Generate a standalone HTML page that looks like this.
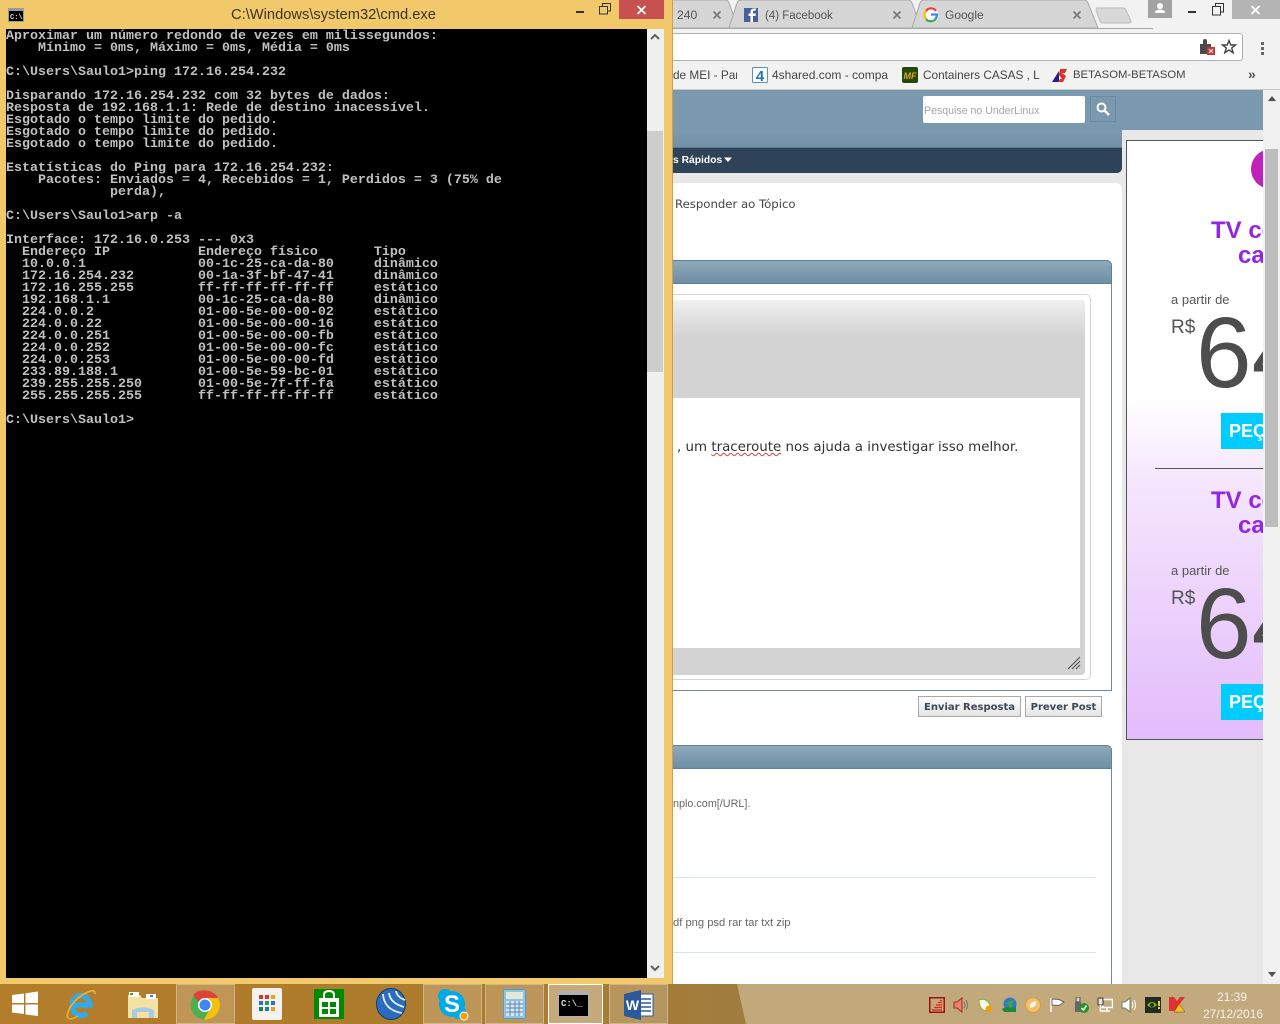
<!DOCTYPE html>
<html lang="pt"><head><meta charset="utf-8"><title>cmd</title>
<style>
html,body{margin:0;padding:0;width:1280px;height:1024px;overflow:hidden;background:#fff}
div,span,svg,pre{position:absolute;box-sizing:border-box}
span.i{position:static}
body{font-family:"Liberation Sans",sans-serif}
.t{white-space:nowrap}
.dj{font-family:"DejaVu Sans",sans-serif}
.ph{background:linear-gradient(#8ea9bb,#6e8fa5);border:1px solid #5f8098;border-radius:0 5px 0 0;border-left:0}
.btn{background:linear-gradient(#fff,#e4e4e4);border:1px solid #a9a9a9;font:bold 10px/21px "DejaVu Sans",sans-serif;color:#3b4856;text-align:center;white-space:nowrap}
.tb{top:984px;height:40px;border:1px solid rgba(255,255,255,.3);background:rgba(255,255,255,.2)}
</style></head><body>

<!-- BROWSER -->
<div style="left:673px;top:0;width:607px;height:984px;background:#f2f2f2;overflow:hidden"></div>
<svg style="left:673px;top:0" width="480" height="30" viewBox="673 0 480 30">
<path d="M660 0H725Q728 0 729 3L738 28H660Z" fill="#d6d6d6" stroke="#a8a8a8"/>
<path d="M729 28L737 3Q738 0 742 0H908Q911 0 912 3L921 28Z" fill="#d6d6d6" stroke="#a8a8a8"/>
<path d="M912 28L920 3Q921 0 925 0H1084Q1087 0 1088 3L1098 28Z" fill="#d6d6d6" stroke="#a8a8a8"/>
<path d="M1097 8H1123Q1125 8 1126 10L1131 21Q1131 23 1129 23H1103Q1101 23 1100 21L1096 10Q1096 8 1097 8Z" fill="#d8d8d8" stroke="#bbb"/>
<path d="M673 28.500H1153" stroke="#a8a8a8"/>
<path d="M713.500 11.500l7 7M720.500 11.500l-7 7M893.500 11.500l7 7M900.500 11.500l-7 7M1073.500 11.500l7 7M1080.500 11.500l-7 7" stroke="#777" stroke-width="1.700"/>
<rect x="744" y="8" width="14" height="14" fill="#46609a"/>
<path d="M753 22V16H755.500L756 13.500H753V12Q753 10.500 754.500 10.500H756V8.500H754Q750.500 8.500 750.500 12V13.500H748.500V16H750.500V22Z" fill="#fff"/>
<circle cx="931" cy="15" r="7.500" fill="#fff"/>
<path d="M936 11A6 6 0 0 0 926 11" fill="none" stroke="#e94235" stroke-width="2.200"/>
<path d="M926 11A6 6 0 0 0 926 19" fill="none" stroke="#fbbc05" stroke-width="2.200"/>
<path d="M926 19A6 6 0 0 0 936.500 17" fill="none" stroke="#34a853" stroke-width="2.200"/>
<path d="M931 14.500H937Q937 17 935.500 19" fill="none" stroke="#4285f4" stroke-width="2.200"/>
</svg>
<div class="t" style="left:677px;top:8px;font-size:12.200px;line-height:14px;color:#555">240</div>
<div class="t" style="left:765px;top:9px;font-size:11.500px;line-height:14px;color:#555">(4) Facebook</div>
<div class="t" style="left:945px;top:8px;font-size:12px;line-height:14px;color:#555">Google</div>
<!-- window buttons -->
<div style="left:1148px;top:0;width:24px;height:18px;background:#a3a3a3"></div>
<svg style="left:1148px;top:0" width="24" height="18"><circle cx="12" cy="6" r="3" fill="#fff"/><path d="M7 13Q7 9.500 12 9.500T17 13Z" fill="#fff"/></svg>
<div style="left:1188px;top:11px;width:8px;height:2px;background:#333"></div>
<svg style="left:1212px;top:3px" width="13" height="13"><path d="M3.500 3V.5H11.500V9H9M.5 3.500H8.500V12H.5Z" fill="none" stroke="#333"/></svg>
<div style="left:1232px;top:0;width:48px;height:19px;background:#b4b4b4"></div>
<svg style="left:1250px;top:5px" width="12" height="10"><path d="M1.500 1l8 8M9.500 1l-8 8" stroke="#fff" stroke-width="1.800"/></svg>
<!-- toolbar -->
<div style="left:640px;top:33px;width:603px;height:28px;background:#fff;border:1px solid #b0b0b0;border-radius:3px"></div>
<svg style="left:1198px;top:38px" width="20" height="18"><path d="M2 6H5V3Q5 1 7 1T9 3V6H13V9Q15 8.500 15 11T13 13V16H2Z" fill="#4a4a4a"/><rect x="9" y="9" width="8" height="8" fill="#d03030"/><path d="M11 11l4 4M15 11l-4 4" stroke="#fff"/></svg>
<svg style="left:1221px;top:39px" width="16" height="15"><path d="M8 1.500L9.800 6H14.500L10.700 9L12.200 13.800L8 11L3.800 13.800L5.300 9L1.500 6H6.200Z" fill="none" stroke="#444" stroke-width="1.400"/></svg>
<div style="left:1261px;top:42px;width:3px;height:3px;background:#666"></div>
<div style="left:1261px;top:47px;width:3px;height:3px;background:#666"></div>
<div style="left:1261px;top:52px;width:3px;height:3px;background:#666"></div>
<!-- bookmarks -->
<div style="left:673px;top:89px;width:607px;height:1px;background:#c8c8c8"></div>
<div class="t" style="left:673px;top:68px;width:64px;overflow:hidden;font-size:11.800px;line-height:14px;color:#444">de MEI - Par</div>
<svg style="left:752px;top:67px" width="16" height="16"><rect x=".5" y=".5" width="15" height="15" fill="#fff" stroke="#5d8fb8" rx="1"/><text x="8" y="14" text-anchor="middle" font-family="Liberation Sans" font-weight="bold" font-size="15" fill="#1f73b0">4</text></svg>
<div class="t" style="left:772px;top:68px;width:116px;overflow:hidden;font-size:12px;line-height:14px;color:#444">4shared.com - compar</div>
<svg style="left:902px;top:67px" width="16" height="16"><rect width="16" height="16" rx="2" fill="#1f4a0a"/><text x="8" y="12" text-anchor="middle" font-family="Liberation Sans" font-weight="bold" font-style="italic" font-size="9" fill="#e8a020">MF</text></svg>
<div class="t" style="left:923px;top:68px;width:117px;overflow:hidden;font-size:11.800px;line-height:14px;color:#444">Containers CASAS , LC</div>
<svg style="left:1052px;top:68px" width="16" height="15"><path d="M0 14L7 3V14Z" fill="#20208a"/><path d="M8 1H15L13 5H10L14 8L11 14H6L8 11H10L7 7Z" fill="#e03020"/></svg>
<div class="t" style="left:1073px;top:68px;font-size:11.300px;line-height:14px;color:#444">BETASOM-BETASOM</div>
<div class="t" style="left:1248px;top:66px;font-size:14px;line-height:16px;font-weight:bold;color:#555">»</div>

<!-- PAGE -->
<div style="left:673px;top:90px;width:590px;height:894px;background:#e8e8e8;overflow:hidden"></div>
<div style="left:673px;top:90px;width:590px;height:40px;background:#7a99ae"></div>
<div style="left:673px;top:130px;width:449px;height:18px;background:linear-gradient(#7b9ab0,#7291a6)"></div>
<div style="left:673px;top:147px;width:449px;height:26px;background:#2f4358;border-radius:0 0 5px 0;border-top:1px solid #5b7a90"></div>
<div class="t" style="left:673px;top:154px;font-size:10.300px;line-height:14px;font-weight:bold;color:#fff">s Rápidos</div>
<svg style="left:723px;top:157px" width="10" height="6"><path d="M1 .5H9L5 5Z" fill="#fff"/></svg>
<div style="left:923px;top:96px;width:162px;height:27px;background:#fff;border-radius:2px"></div>
<div class="t" style="left:924px;top:104px;font-size:10.600px;line-height:14px;color:#a6a6a6">Pesquise no UnderLinux</div>
<div style="left:1090px;top:96px;width:26px;height:26px;background:#7a99ae;border:1px solid #6a8ba2"></div>
<svg style="left:1095px;top:101px" width="16" height="16"><circle cx="6.500" cy="6.500" r="4" fill="none" stroke="#fff" stroke-width="2"/><path d="M9.500 9.500L14 14" stroke="#fff" stroke-width="2.500"/></svg>
<div style="left:660px;top:183px;width:462px;height:820px;background:#fff;border-radius:6px"></div>
<div class="t dj" style="left:675px;top:197px;font-size:11.700px;line-height:15px;color:#444">Responder ao Tópico</div>

<!-- panel 1 -->
<div class="ph" style="left:673px;top:260px;width:439px;height:24px"></div>
<div style="left:660px;top:284px;width:452px;height:407px;background:#fff;border-right:1px solid #6b8ba1;border-bottom:1px solid #6b8ba1"></div>
<div style="left:660px;top:294px;width:431px;height:386px;border:1px solid #d5d5d5;border-radius:5px;background:#fff"></div>
<div style="left:660px;top:300px;width:425px;height:375px;background:linear-gradient(#f0f0f0,#d3d3d3 37px);border-radius:4px"></div>
<div style="left:660px;top:398px;width:420px;height:250px;background:#fff"></div>
<div class="t dj" style="left:677px;top:439px;font-size:13.400px;line-height:17px;color:#333">, um <span class="i" style="text-decoration:underline wavy #d04040 1px;text-underline-offset:1px">traceroute</span> nos ajuda a investigar isso melhor.</div>
<svg style="left:1067px;top:656px" width="14" height="14"><path d="M1 13L13 1M5 13L13 5M9 13L13 9" stroke="#555" stroke-width="1.200"/></svg>
<div class="btn" style="left:918px;top:696px;width:103px;height:21px">Enviar Resposta</div>
<div class="btn" style="left:1025px;top:696px;width:77px;height:21px">Prever Post</div>

<!-- panel 2 -->
<div class="ph" style="left:673px;top:745px;width:439px;height:24px"></div>
<div style="left:660px;top:769px;width:452px;height:240px;background:#fff;border-right:1px solid #6b8ba1"></div>
<div class="t" style="left:673px;top:797px;font-size:10.800px;line-height:14px;color:#666">nplo.com[/URL].</div>
<div style="left:673px;top:877px;width:423px;height:1px;background:#d6e3ec"></div>
<div class="t" style="left:673px;top:916px;font-size:11.200px;line-height:14px;color:#666">df png psd rar tar txt zip</div>
<div style="left:673px;top:952px;width:423px;height:1px;background:#d6e3ec"></div>

<!-- ad -->
<div style="left:1126px;top:140px;width:160px;height:600px;border:1px solid #555;background:linear-gradient(#fff 0,#fff 260px,#f5e6fd 340px,#e3bcfb 100%);overflow:hidden">
<div style="left:124px;top:8px;width:40px;height:40px;border-radius:50%;background:linear-gradient(90deg,#c81fb0,#9a30e8)"></div>
<div class="t" style="left:84px;top:76px;font:bold 24px/28px 'Liberation Sans',sans-serif;color:#9225e6">TV com</div>
<div class="t" style="left:111px;top:101px;font:bold 24px/28px 'Liberation Sans',sans-serif;color:#9225e6">canais</div>
<div class="t" style="left:44px;top:151px;font-size:13px;line-height:16px;color:#555">a partir de</div>
<div class="t" style="left:44px;top:175px;font-size:19px;line-height:24px;color:#555">R$</div>
<div class="t" style="left:69px;top:154px;font-size:100px;line-height:116px;color:#4d4d4d">64</div>
<div style="left:94px;top:272px;width:80px;height:36px;background:#00ccff"></div>
<div class="t" style="left:102px;top:280px;font:bold 18px/20px 'Liberation Sans',sans-serif;color:#fff">PEÇA</div>
<div style="left:28px;top:327px;width:130px;height:1px;background:#555"></div>
<div class="t" style="left:84px;top:346px;font:bold 24px/28px 'Liberation Sans',sans-serif;color:#9225e6">TV com</div>
<div class="t" style="left:111px;top:371px;font:bold 24px/28px 'Liberation Sans',sans-serif;color:#9225e6">canais</div>
<div class="t" style="left:44px;top:422px;font-size:13px;line-height:16px;color:#555">a partir de</div>
<div class="t" style="left:44px;top:446px;font-size:19px;line-height:24px;color:#555">R$</div>
<div class="t" style="left:69px;top:425px;font-size:100px;line-height:116px;color:#4d4d4d">64</div>
<div style="left:94px;top:543px;width:80px;height:36px;background:#00ccff"></div>
<div class="t" style="left:102px;top:551px;font:bold 18px/20px 'Liberation Sans',sans-serif;color:#fff">PEÇA</div>
</div>
<!-- page scrollbar -->
<div style="left:1263px;top:90px;width:17px;height:894px;background:#f1f1f1"></div>
<div style="left:1265px;top:149px;width:13px;height:378px;background:#bdbdbd"></div>
<svg style="left:1267px;top:96px" width="10" height="6"><path d="M1 5H9L5 0Z" fill="#505050"/></svg>
<svg style="left:1267px;top:972px" width="10" height="6"><path d="M1 0H9L5 5Z" fill="#505050"/></svg>

<!-- CMD WINDOW -->
<div style="left:0;top:0;width:673px;height:984px;background:#f1c86a;border-right:1px solid #c9a24a"></div>
<svg style="left:8px;top:8px" width="16" height="14"><rect width="16" height="14" fill="#9a9a9a"/><rect x="1" y="3" width="14" height="10" fill="#000"/><text x="2" y="11" font-family="Liberation Mono" font-weight="bold" font-size="7" fill="#ddd">C:\</text></svg>
<div class="t" style="left:231px;top:6px;font-size:14.700px;line-height:18px;color:#3b3520">C:\Windows\system32\cmd.exe</div>
<div style="left:576px;top:11px;width:8px;height:2px;background:#333"></div>
<svg style="left:599px;top:3px" width="13" height="12"><path d="M3.500 3V.5H11.500V8H9M.5 3.500H8.500V11H.5Z" fill="none" stroke="#333"/></svg>
<div style="left:619px;top:0;width:45px;height:19px;background:#c75050"></div>
<svg style="left:636px;top:5px" width="12" height="10"><path d="M1.500 1l8 8M9.500 1l-8 8" stroke="#fff" stroke-width="1.800"/></svg>
<div style="left:6px;top:29px;width:641px;height:949px;background:#000"></div>
<div style="left:647px;top:29px;width:17px;height:949px;background:#f0f0f0"></div>
<div style="left:647px;top:131px;width:16px;height:241px;background:#cdcdcd"></div>
<svg style="left:650px;top:33px" width="10" height="8"><path d="M1 6L5 2L9 6" fill="none" stroke="#606060" stroke-width="2"/></svg>
<svg style="left:650px;top:965px" width="10" height="8"><path d="M1 1L5 5L9 1" fill="none" stroke="#606060" stroke-width="2"/></svg>
<pre style="left:6px;top:31px;margin:0;font:bold 13.333px/12px 'Liberation Mono',monospace;color:#c0c0c0">Aproximar um número redondo de vezes em milissegundos:
    Mínimo = 0ms, Máximo = 0ms, Média = 0ms

C:\Users\Saulo1&gt;ping 172.16.254.232

Disparando 172.16.254.232 com 32 bytes de dados:
Resposta de 192.168.1.1: Rede de destino inacessível.
Esgotado o tempo limite do pedido.
Esgotado o tempo limite do pedido.
Esgotado o tempo limite do pedido.

Estatísticas do Ping para 172.16.254.232:
    Pacotes: Enviados = 4, Recebidos = 1, Perdidos = 3 (75% de
             perda),

C:\Users\Saulo1&gt;arp -a

Interface: 172.16.0.253 --- 0x3
  Endereço IP           Endereço físico       Tipo
  10.0.0.1              00-1c-25-ca-da-80     dinâmico
  172.16.254.232        00-1a-3f-bf-47-41     dinâmico
  172.16.255.255        ff-ff-ff-ff-ff-ff     estático
  192.168.1.1           00-1c-25-ca-da-80     dinâmico
  224.0.0.2             01-00-5e-00-00-02     estático
  224.0.0.22            01-00-5e-00-00-16     estático
  224.0.0.251           01-00-5e-00-00-fb     estático
  224.0.0.252           01-00-5e-00-00-fc     estático
  224.0.0.253           01-00-5e-00-00-fd     estático
  233.89.188.1          01-00-5e-59-bc-01     estático
  239.255.255.250       01-00-5e-7f-ff-fa     estático
  255.255.255.255       ff-ff-ff-ff-ff-ff     estático

C:\Users\Saulo1&gt;</pre>

<!-- TASKBAR -->
<div style="left:0;top:984px;width:1280px;height:40px;background:linear-gradient(90deg,#b37d2b 0,#ac7b2e 500px,#a07d3e 740px,#a07d3e 100%)"></div>
<div style="left:0;top:984px;width:1280px;height:40px;background:linear-gradient(90deg,#bfa776,#c2aa7e);clip-path:polygon(737px 0,1280px 0,1280px 40px,746px 40px)"></div>
<div class="tb" style="left:176px;width:59px"></div>
<div class="tb" style="left:423px;width:59px"></div>
<div class="tb" style="left:485px;width:59px"></div>
<div class="tb" style="left:548px;width:55px;border:1px solid #fff;background:rgba(255,255,255,.35)"></div>
<div class="tb" style="left:609px;width:59px"></div>
<!-- start -->
<svg style="left:12px;top:991px" width="27" height="26"><path d="M0 4L12 2.500V12H0ZM13.500 2.300L26 .5V12H13.500ZM0 13.500H12V23L0 21.500ZM13.500 13.500H26V25L13.500 23.500Z" fill="#fff"/></svg>
<!-- IE -->
<svg style="left:66px;top:988px" width="30" height="32"><path d="M7 17H24A9 10 0 1 0 21 25" fill="none" stroke="#35a8e6" stroke-width="5.500"/><path d="M2 30C-1 26 7 10 22 4C27 2 29 2 29 6" fill="none" stroke="#e8b020" stroke-width="1.800"/><path d="M2 30C4 32 9 30 12 28" fill="none" stroke="#e8b020" stroke-width="1.500"/></svg>
<!-- explorer -->
<svg style="left:128px;top:990px" width="30" height="30"><path d="M0 5H12L14 8H30V28H0Z" fill="#f4e2a4"/><rect x="1" y="2" width="10" height="5" fill="#fff"/><rect x="2" y="3" width="3" height="2" fill="#3a3"/><rect x="18" y="4" width="10" height="5" fill="#fff"/><rect x="22" y="5" width="3" height="2" fill="#48c"/><path d="M4 20Q15 15 26 20V28H21V22H9V28H4Z" fill="#a4cce6"/></svg>
<!-- chrome -->
<svg style="left:190px;top:990px" width="30" height="30"><circle cx="15" cy="15" r="14.500" fill="#4caf50"/><path d="M15 .5A14.500 14.500 0 0 1 28 8H15A7 7 0 0 0 8.500 12L3 5A14.500 14.500 0 0 1 15 .5Z" fill="#db4437"/><path d="M28 8A14.500 14.500 0 0 1 14 29.500L21 17A7 7 0 0 0 15 8Z" fill="#f4c20d"/><circle cx="15" cy="15" r="7" fill="#fff"/><circle cx="15" cy="15" r="5.500" fill="#4285f4"/></svg>
<!-- apps -->
<svg style="left:252px;top:988px" width="30" height="32"><rect width="30" height="32" rx="2" fill="#f4f2ee"/><g><rect x="7" y="7" width="4" height="4" fill="#e03030"/><rect x="13" y="7" width="4" height="4" fill="#e03030"/><rect x="19" y="7" width="4" height="4" fill="#f0a010"/><rect x="7" y="13" width="4" height="4" fill="#2a70d0"/><rect x="13" y="13" width="4" height="4" fill="#20a060"/><rect x="19" y="13" width="4" height="4" fill="#2a70d0"/><rect x="7" y="19" width="4" height="4" fill="#208050"/><rect x="13" y="19" width="4" height="4" fill="#2a70d0"/><rect x="19" y="19" width="4" height="4" fill="#f0a010"/></g></svg>
<!-- store -->
<svg style="left:314px;top:989px" width="30" height="30"><rect width="30" height="30" fill="#008a00"/><path d="M5 9H25V28H5Z" fill="#fff"/><path d="M10 9V6Q10 2 15 2T20 6V9" fill="none" stroke="#fff" stroke-width="2"/><path d="M8 13H14V18H8ZM16 13H22V18H16ZM8 20H14V25H8ZM16 20H22V25H16Z" fill="#008a00"/></svg>
<!-- mikrotik -->
<svg style="left:376px;top:988px" width="30" height="32"><ellipse cx="15" cy="16" rx="14.500" ry="15.500" fill="#2a6cc0" stroke="#173a6a"/><path d="M7 6Q8 22 26 25M13 5Q14 15 28 19M20 3Q21 9 29 12" fill="none" stroke="#e4eef8" stroke-width="1.800"/></svg>
<!-- skype -->
<svg style="left:437px;top:988px" width="32" height="33"><circle cx="15" cy="16" r="13" fill="#00a9e8"/><circle cx="8" cy="8" r="7" fill="#00a9e8"/><circle cx="22" cy="24" r="7" fill="#00a9e8"/><text x="15" y="24" text-anchor="middle" font-family="Liberation Sans" font-weight="bold" font-size="24" fill="#fff">S</text><circle cx="27" cy="28" r="4" fill="#f5a000" stroke="#fff"/></svg>
<!-- calc -->
<svg style="left:503px;top:989px" width="23" height="30"><rect x=".5" y=".5" width="22" height="29" rx="1" fill="#8cc4e8" stroke="#5a9ac8"/><rect x="3" y="3" width="17" height="7" fill="#e4e8d8"/><rect x="3" y="12" width="17" height="15" fill="#d4e4f0"/><path d="M3 15H20M3 19H20M3 23H20M7 12V27M12 12V27M16 12V27" stroke="#5a8ab0"/></svg>
<!-- cmd -->
<svg style="left:558px;top:991px" width="31" height="26"><rect width="31" height="26" fill="#b0b0b0"/><rect x="1" y="4" width="29" height="21" fill="#000"/><text x="3" y="15" font-family="Liberation Mono" font-weight="bold" font-size="9" fill="#ddd">C:\_</text></svg>
<!-- word -->
<svg style="left:624px;top:990px" width="30" height="30"><rect x="12" y="4" width="17" height="22" fill="#fff" stroke="#2a5a9c"/><path d="M15 9H27M15 13H27M15 17H27M15 21H27" stroke="#2a5a9c" stroke-width="1.500"/><path d="M0 4L17 0V30L0 26Z" fill="#2a5a9c"/><text x="8.500" y="20" text-anchor="middle" font-family="Liberation Sans" font-weight="bold" font-size="14" fill="#fff">W</text></svg>
<!-- tray -->
<svg style="left:929px;top:997px" width="16" height="16"><rect x=".75" y=".75" width="14.500" height="14.500" fill="none" stroke="#a01010" stroke-width="1.500"/><path d="M3 13H13M5 10.500H13M7 8H13M9 5.500H13M11 3.500H13" stroke="#f02020" stroke-width="1.200"/></svg>
<svg style="left:953px;top:997px" width="16" height="16"><path d="M1 5H4L9 1V15L4 11H1Z" fill="#e88070" stroke="#a03020"/><path d="M11 5Q13 8 11 11M13 3Q16 8 13 13" fill="none" stroke="#776"/></svg>
<svg style="left:978px;top:997px" width="16" height="16"><path d="M1 3Q8 0 12 8Q10 15 5 13Q1 10 1 3Z" fill="#f4f8e8" stroke="#8ab040"/><circle cx="11" cy="12" r="3.500" fill="#f0a010"/></svg>
<svg style="left:1002px;top:997px" width="16" height="16"><circle cx="8" cy="7" r="6.500" fill="#2a7ac8"/><path d="M4 6L12 3L9 11Z" fill="#50a040"/><path d="M0 12Q6 8 10 12L14 9V15H2Z" fill="#208a30"/></svg>
<svg style="left:1025px;top:997px" width="16" height="16"><circle cx="8" cy="8" r="7.500" fill="#f0c070" stroke="#e09a30"/><path d="M5 11Q4 5 11 4Q12 10 5 11Z" fill="#fff8e8"/></svg>
<svg style="left:1049px;top:997px" width="16" height="16"><path d="M2 1V15" stroke="#fff" stroke-width="1.500"/><path d="M3 2L10 2.500L15 5L10 8.500L3 8Z" fill="#fff" stroke="#665"/></svg>
<svg style="left:1073px;top:997px" width="16" height="16"><rect x="2" y="5" width="6" height="10" fill="#666"/><rect x="3" y="0" width="4" height="5" fill="#ccc" stroke="#555"/><circle cx="11" cy="11" r="5" fill="#2a9030"/><path d="M8.500 11L10.500 13L13.500 8.500" fill="none" stroke="#fff" stroke-width="1.500"/></svg>
<svg style="left:1097px;top:997px" width="16" height="16"><rect x="5.500" y="2.500" width="10" height="8" fill="none" stroke="#fff" stroke-width="1.500"/><rect x="1" y="1" width="5" height="7" rx="1" fill="#e8e0d0" stroke="#333"/><path d="M3.500 8V14H13M10 11V14" fill="none" stroke="#fff" stroke-width="1.500"/></svg>
<svg style="left:1121px;top:997px" width="16" height="16"><path d="M1 5H4L9 1V15L4 11H1Z" fill="#fff" stroke="#776"/><path d="M11 5Q13 8 11 11M13 3Q16 8 13 13" fill="none" stroke="#fff"/></svg>
<svg style="left:1145px;top:997px" width="16" height="16"><rect width="16" height="16" fill="#222a22"/><path d="M2 8Q7 2 12 8Q7 13 2 8Z" fill="#76b900"/><circle cx="7" cy="8" r="2" fill="#222a22"/><rect x="13" y="4" width="2" height="5" fill="#f0d020"/><rect x="13" y="10" width="2" height="2" fill="#f0d020"/></svg>
<svg style="left:1169px;top:997px" width="16" height="16"><path d="M0 0H5L8 4L11 0H16L10 8L12 11L8 16L5 14H0Z" fill="#e03030"/><path d="M10 7L16 15H5Z" fill="#f5c020" stroke="#705010" stroke-width=".5"/></svg>
<div class="t" style="left:1203px;top:990px;width:58px;text-align:center;font-size:12px;line-height:14px;color:#f6f1e6">21:39</div>
<div class="t" style="left:1203px;top:1007px;width:58px;text-align:center;font-size:12px;line-height:14px;color:#f6f1e6">27/12/2016</div>
</body></html>
